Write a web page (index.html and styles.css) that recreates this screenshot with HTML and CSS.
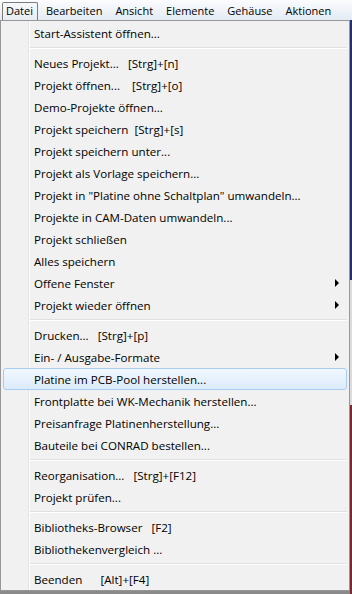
FILE: index.html
```html
<!DOCTYPE html>
<html lang="de">
<head>
  <meta charset="UTF-8" />
  <meta name="viewport" content="width=device-width, initial-scale=1.0"/>
  <title>Datei-Menü</title>
  <link rel="stylesheet" href="styles.css">
</head>
<body>

  <div class="screen">
    <!-- Menüleiste -->
    <div class="menubar">
      <span class="top open">Datei</span>
      <span class="top">Bearbeiten</span>
      <span class="top">Ansicht</span>
      <span class="top">Elemente</span>
      <span class="top">Gehäuse</span>
      <span class="top">Aktionen</span>
    </div>

    <div class="stage">
      <!-- Datei-Menü -->
      <div class="menu">
        <div class="item">Start-Assistent öffnen...</div>
        <div class="sep"></div>
        <div class="item">Neues Projekt...   [Strg]+[n]</div>
        <div class="item">Projekt öffnen...    [Strg]+[o]</div>
        <div class="item">Demo-Projekte öffnen...</div>
        <div class="item">Projekt speichern  [Strg]+[s]</div>
        <div class="item">Projekt speichern unter...</div>
        <div class="item">Projekt als Vorlage speichern...</div>
        <div class="item">Projekt in "Platine ohne Schaltplan" umwandeln...</div>
        <div class="item">Projekte in CAM-Daten umwandeln...</div>
        <div class="item">Projekt schließen</div>
        <div class="item">Alles speichern</div>
        <div class="item sub">Offene Fenster</div>
        <div class="item sub">Projekt wieder öffnen</div>
        <div class="sep"></div>
        <div class="item">Drucken...   [Strg]+[p]</div>
        <div class="item sub">Ein- / Ausgabe-Formate</div>
        <div class="item hot">Platine im PCB-Pool herstellen...</div>
        <div class="item">Frontplatte bei WK-Mechanik herstellen...</div>
        <div class="item">Preisanfrage Platinenherstellung...</div>
        <div class="item">Bauteile bei CONRAD bestellen...</div>
        <div class="sep"></div>
        <div class="item">Reorganisation...   [Strg]+[F12]</div>
        <div class="item">Projekt prüfen...</div>
        <div class="sep"></div>
        <div class="item">Bibliotheks-Browser   [F2]</div>
        <div class="item">Bibliothekenvergleich ...</div>
        <div class="sep"></div>
        <div class="item">Beenden      [Alt]+[F4]</div>
      </div>
      <div class="backdrop"></div>
    </div>
  </div>

</body>
</html>
```

FILE: styles.css
```css
body {
  margin: 0;
  font-family: "Segoe UI", "Open Sans", "Noto Sans", sans-serif;
  font-size: 11.6px;
  color: #000;
  background-color: #8a8a8a;
}

.screen {
  width: 352px;
  height: 594px;
  display: flex;
  flex-direction: column;
  overflow: hidden;
}

/* Menüleiste */
.menubar {
  height: 20px;
  display: flex;
  align-items: flex-start;
  padding-left: 2px;
  font-size: 11px;
  white-space: nowrap;
  background: linear-gradient(#fbfcfe, #e4ebf4);
}

.top {
  height: 17px;
  line-height: 16px;
  margin-top: 2px;
  margin-right: 4px;
  padding: 0 4px 0 3px;
  box-sizing: border-box;
  border: 1px solid transparent;
}

.top.open {
  height: 18px;
  border-color: #7b7b7b;
  border-bottom: none;
  border-radius: 2px 2px 0 0;
  background: linear-gradient(#f6f8fb, #e9edf2);
}

.stage {
  flex-grow: 1;
  display: flex;
  align-items: flex-start;
}

/* Menü */
.menu {
  width: 350px;
  box-sizing: border-box;
  border: 1px solid #979797;
  padding: 1px 1px 0 1px;
  background: linear-gradient(to right, #f1f1f1 27px, #e2e3e3 27px 28px, #ffffff 28px 29px, #f1f1f1 29px);
}

.item {
  height: 22px;
  margin: 0 1px;
  padding: 0 7px 0 30px;
  box-sizing: border-box;
  border: 1px solid transparent;
  border-radius: 3px;
  display: flex;
  align-items: center;
  white-space: pre;
}

.item.hot {
  border-color: #a9cdf1;
  background: linear-gradient(#f1f7fe, #dcebfb);
}

.item.sub::after {
  content: "";
  margin-left: auto;
  border-left: 4px solid #000;
  border-top: 4px solid transparent;
  border-bottom: 4px solid transparent;
}

.sep {
  height: 8px;
  margin: 0 1px 0 28px;
  background: linear-gradient(transparent 3px, #e0e0e0 3px 4px, #ffffff 4px 5px, transparent 5px);
}

.backdrop {
  flex-grow: 1;
  align-self: stretch;
  background: linear-gradient(#24306e 0 260px, #dcdcdc 260px 385px, #7a2a2e 385px);
}
```
